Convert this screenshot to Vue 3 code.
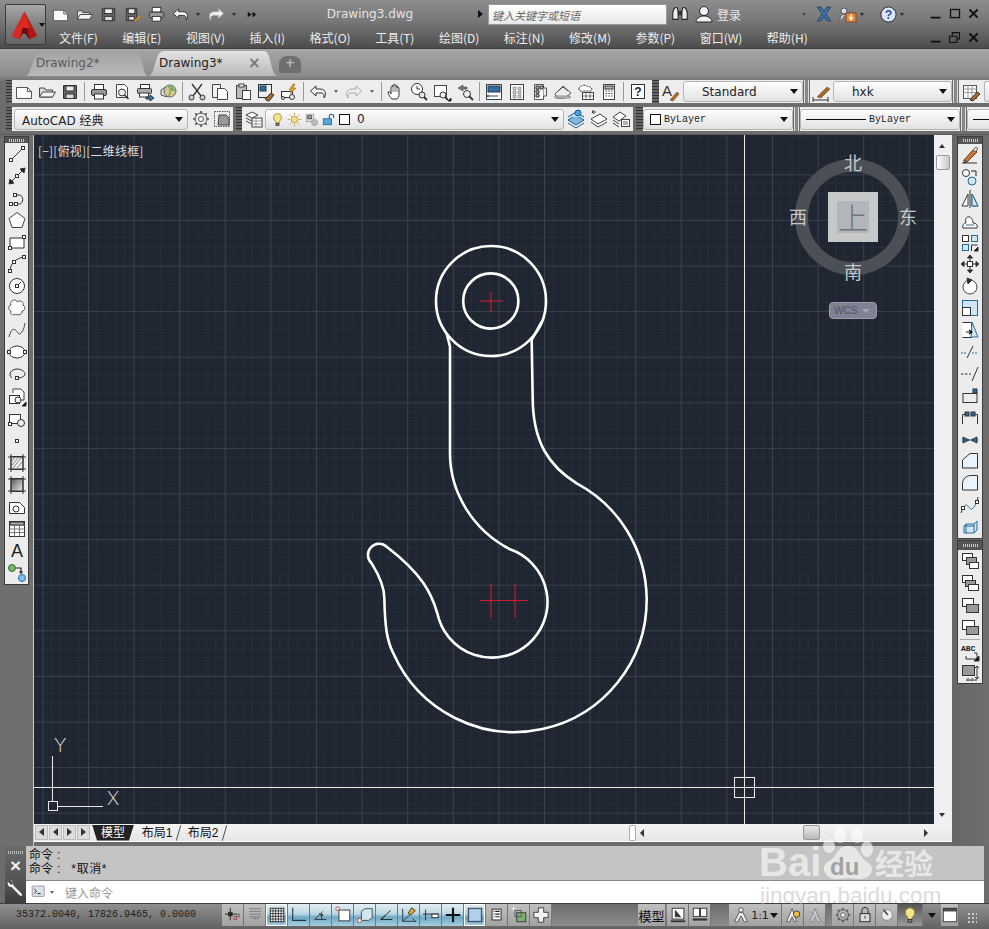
<template>
  <div class="app">
    <header class="titlebar">
      <button class="app-btn">
        <svg width="32" height="32" viewBox="0 0 32 32">
          <path d="M16 2 L29 27 L21 31 L19 23 H13 L11 31 L3 27 Z" fill="#b01818" />
          <path d="M16 2 L22 19 H14 L11 31 L3 27 Z" fill="#d92a22" />
          <path d="M11 31 L14 19 H19 L21 31 L17 25 H14 Z" fill="#6c0c0c" />
        </svg>
        <i class="tri app-tri"></i>
      </button>
      <div class="title-col">
        <div class="title-row">
          <span v-for="(ic, i) in quick" :key="i" :class="ic.small ? 'qa-small' : 'qa'">
            <i v-if="ic.small" class="tri tri-tiny"></i>
            <Ico v-else :n="ic.n" :s="19" />
          </span>
          <span class="doc-title">Drawing3.dwg</span>
          <i class="play"></i>
          <div class="search">键入关键字或短语</div>
          <span class="qa binoc"><Ico n="binoc" :s="18" /></span>
          <span class="qa"><Ico n="user" :s="20" /></span>
          <span class="login">登录</span>
          <i class="tri tri-tiny login-arrow"></i>
          <span class="qa x-btn"><Ico n="xapp" :s="20" /></span>
          <span class="qa"><Ico n="lock2" :s="20" /></span>
          <i class="tri tri-tiny"></i>
          <span class="qa help"><Ico n="help" :s="19" /></span>
          <i class="tri tri-tiny"></i>
          <div class="win-ctl">
            <Ico n="wmin" :s="18" /><Ico n="wmax" :s="18" /><Ico n="wclose" :s="18" />
          </div>
        </div>
        <div class="menu-row">
          <nav class="menu">
            <span v-for="m in menus" :key="m">{{ m }}</span>
          </nav>
          <div class="win-ctl">
            <Ico n="wmin" :s="18" /><Ico n="wrest" :s="18" /><Ico n="wclose" :s="18" />
          </div>
        </div>
      </div>
    </header>

    <div class="doc-tabs">
      <div class="doc-tab">Drawing2*</div>
      <div class="doc-tab active">Drawing3*<b>×</b></div>
      <div class="doc-new"><span>+</span></div>
    </div>

    <div class="toolbars">
      <div class="tb-row">
        <i class="grip"></i>
        <div class="panel std">
          <template v-for="(ic, i) in row1" :key="i">
            <i v-if="ic === '|'" class="sep"></i>
            <i v-else-if="ic === 'v'" class="arrow-cell"><i class="tri tri-tiny dim"></i></i>
            <span v-else class="tb-btn"><Ico :n="ic" /></span>
          </template>
        </div>
        <i class="grip g2"></i>
        <div class="panel">
          <span class="tb-btn"><Ico n="textstyle" /></span>
          <div class="combo c-std">Standard<i class="tri"></i></div>
        </div>
        <i class="bars"></i>
        <div class="panel">
          <span class="tb-btn"><Ico n="dimstyle" /></span>
          <div class="combo c-hxk">hxk<i class="tri"></i></div>
        </div>
        <i class="bars"></i>
        <div class="panel">
          <span class="tb-btn"><Ico n="tablestyle" /></span>
          <div class="combo c-tail"></div>
        </div>
      </div>
      <div class="tb-row row2">
        <i class="grip"></i>
        <div class="panel">
          <div class="combo c-ws">AutoCAD 经典<i class="tri"></i></div>
          <span class="tb-btn gear"><Ico n="gear" /></span>
          <span class="tb-btn"><Ico n="wsbox" /></span>
        </div>
        <i class="grip g3"></i>
        <div class="panel">
          <span class="tb-btn"><Ico n="layers" /></span>
          <div class="combo c-layer">
            <Ico n="bulb" :s="15" /><Ico n="sun" :s="15" /><Ico n="freeze" :s="15" /><Ico n="unlock" :s="15" />
            <i class="swatch"></i><span class="layer-name">0</span><i class="tri"></i>
          </div>
          <span class="tb-btn"><Ico n="layerblue" /></span>
          <span class="tb-btn"><Ico n="layerprev" /></span>
          <span class="tb-btn"><Ico n="layerstate" /></span>
        </div>
        <i class="grip g4"></i>
        <div class="panel">
          <div class="combo mono c-color"><i class="swatch"></i>ByLayer<i class="tri"></i></div>
        </div>
        <i class="bars"></i>
        <div class="panel">
          <div class="combo mono c-ltype"><i class="dash"></i>ByLayer<i class="tri"></i></div>
        </div>
        <i class="bars"></i>
        <div class="panel">
          <div class="combo mono c-tail2"><i class="dash"></i></div>
        </div>
      </div>
    </div>

    <div class="workspace">
      <aside class="side-left">
        <div class="vbar">
          <i class="vgrip"></i>
          <span v-for="ic in leftTools" :key="ic" class="v-btn"><Ico :n="ic" /></span>
        </div>
      </aside>

      <main class="center">
        <div class="view-row">
          <div class="canvas">
            <svg class="drawing" width="900" height="689" viewBox="34 135 900 689">
              <defs>
                <pattern id="grid" x="88" y="174.3" width="45.6" height="45.6" patternUnits="userSpaceOnUse">
                  <path d="M9.12 0V45.6M18.24 0V45.6M27.36 0V45.6M36.48 0V45.6M0 9.12H45.6M0 18.24H45.6M0 27.36H45.6M0 36.48H45.6" stroke="#252d38" stroke-width="1" />
                  <path d="M0.5 0V45.6M0 0.5H45.6" stroke="#39414d" stroke-width="1" />
                </pattern>
              </defs>
              <rect x="34" y="135" width="900" height="689" fill="#1f2632" />
              <rect x="34" y="135" width="900" height="689" fill="url(#grid)" />

              <g fill="none" stroke="#fff" stroke-width="2.6">
                <circle cx="491" cy="301" r="55" />
                <circle cx="490.8" cy="301" r="27.6" />
                <path transform="translate(350 230) scale(.33333)" :d="hookPath" stroke-width="7.8" stroke-linejoin="round" />
              </g>
              <path
                d="M480 301H503M491 292V312M480 600.5H528M491 584V618M515 584V618"
                stroke="#d01c30"
                fill="none"
              />

              <path d="M744.5 135V824M34 787.5H934" stroke="#e6e8ea" />
              <rect x="734.5" y="777.5" width="20" height="20" fill="none" stroke="#eceeef" />

              <g fill="none" stroke="#e6e8ea">
                <path d="M52.5 756V801M58 806.5H103" />
                <rect x="48.5" y="801.5" width="9" height="9" />
              </g>
              <text x="54" y="752" class="ucs">Y</text>
              <text x="107" y="805" class="ucs">X</text>

              <circle cx="853" cy="217" r="51.5" fill="none" stroke="#4b5057" stroke-width="13" />
              <rect x="828" y="192" width="50" height="50" fill="#c6c8c9" />
              <rect x="837" y="201" width="32" height="32" fill="#b2b5b9" />
              <text x="853" y="229" class="cube-top">上</text>
              <text x="853" y="170" class="compass">北</text>
              <text x="853" y="279" class="compass">南</text>
              <text x="798" y="224" class="compass">西</text>
              <text x="908" y="224" class="compass">东</text>
            </svg>
            <div class="vp-label">[−][俯视][二维线框]</div>
            <div class="wcs">WCS<i></i></div>
          </div>
          <div class="vscroll">
            <i class="sc-up"></i>
            <i class="sc-thumb"></i>
            <i class="sc-down"></i>
          </div>
        </div>
        <div class="layout-row">
          <div class="nav-btns">
            <i class="nb first"></i><i class="nb prev"></i><i class="nb next"></i><i class="nb last"></i>
          </div>
          <span class="lt lt-model">模型</span>
          <span class="lt slant">布局1</span>
          <span class="lt slant">布局2</span>
          <i class="split"></i>
          <i class="h-left"></i>
          <i class="h-thumb"></i>
          <i class="h-right"></i>
        </div>
      </main>

      <aside class="side-right">
        <div class="vbar r1">
          <i class="vgrip"></i>
          <span v-for="ic in rightTools" :key="ic" class="v-btn"><Ico :n="ic" /></span>
        </div>
        <div class="vbar r2">
          <i class="vgrip"></i>
          <span v-for="ic in orderTools" :key="ic" class="v-btn"><Ico :n="ic" /></span>
          <i class="hsep"></i>
          <span class="v-btn"><Ico n="abc" /></span>
          <span class="v-btn"><Ico n="annoscale" /></span>
        </div>
      </aside>
    </div>

    <section class="command">
      <div class="cmd-handle">
        <i class="cmd-grip"></i>
        <b class="cmd-x">×</b>
        <Ico n="wrench" :s="18" />
      </div>
      <div class="cmd-body">
        <div class="cmd-log">
          <div>命令<span class="colon">:</span></div>
          <div>命令<span class="colon">:</span><span class="cancel">*取消*</span></div>
        </div>
        <div class="cmd-input">
          <Ico n="prompt" :s="16" />
          <i class="tri tri-tiny dim"></i>
          <span>键入命令</span>
        </div>
      </div>
    </section>

    <footer class="status">
      <span class="coords">35372.0040, 17826.9465, 0.0000</span>
      <span v-for="b in statusBtns" :key="b.n" class="st-btn" :class="{ on: b.on, sel: b.sel }"><Ico :n="b.n" :s="18" /></span>
      <span class="st-gap"></span>
      <span class="st-btn st-model">模型</span>
      <span class="st-btn"><Ico n="layoutA" :s="18" /></span>
      <span class="st-btn"><Ico n="layoutB" :s="18" /></span>
      <span class="st-gap g-s"></span>
      <span class="st-btn st-scale"><Ico n="anno" :s="18" />1:1<i class="tri"></i></span>
      <span class="st-btn"><Ico n="annoY" :s="18" /></span>
      <span class="st-btn"><Ico n="annoG" :s="18" /></span>
      <span class="st-gap g-t"></span>
      <span class="st-btn"><Ico n="gear" :s="18" /></span>
      <span class="st-btn"><Ico n="padlock" :s="18" /></span>
      <span class="st-btn"><Ico n="tools" :s="18" /></span>
      <span class="st-btn st-light"><Ico n="bulb" :s="18" /></span>
      <i class="tri st-tri"></i>
      <span class="st-btn st-win"><Ico n="cleanscr" :s="18" /></span>
      <i class="st-grip"></i>
    </footer>

    <div class="watermark">
      <svg width="60" height="60" viewBox="0 0 60 60" class="paw">
        <ellipse cx="23" cy="10" rx="6" ry="8" />
        <ellipse cx="40" cy="10" rx="6" ry="8" />
        <ellipse cx="12" cy="21" rx="6" ry="7" />
        <ellipse cx="50" cy="24" rx="6" ry="8" />
        <path d="M31 21C20 21 20 32 12 36C2 41 8 55 20 54C27 53 35 53 42 54C54 55 60 42 50 37C42 32 42 21 31 21Z" />
      </svg>
      <span class="wm-bai">Bai</span>
      <span class="wm-du">du</span>
      <span class="wm-cn">经验</span>
      <span class="wm-url">jingyan.baidu.com</span>
    </div>
  </div>
</template>

<script setup>
import { h } from "vue";

const grip = (x, y) => `<rect x="${x - 1.5}" y="${y - 1.5}" width="3" height="3" fill="#fff"/>`;
const sheet = (x, y, w, ht, f = "#fff") => `<rect x="${x}" y="${y}" width="${w}" height="${ht}" fill="${f}"/>`;

const icons = {
  new: '<path d="M2.5 5.5h11l4 4v7h-15z" fill="#fafafa" stroke="#555"/><path d="M13.5 5.5v4h4" stroke="#555"/>',
  open: '<path d="M2.5 15V6h5l1 2h7v7z" fill="#ddd" stroke="#444"/><path d="M2.5 15l3-5h13l-3 5z" fill="#f2f2f2" stroke="#444"/>',
  save: '<path d="M3.5 3.5h13v13h-13z" fill="#666" stroke="#333"/><rect x="6" y="4" width="8" height="5" fill="#eee"/><rect x="6" y="12" width="8" height="4.5" fill="#ddd"/>',
  saveas: '<path d="M3.5 3.5h11v13h-11z" fill="#666" stroke="#333"/><rect x="5.5" y="4" width="7" height="5" fill="#eee"/><rect x="6" y="12" width="6" height="4" fill="#ddd"/><path d="M11 17l6-6 2 1-6 6z" fill="#d99a3a" stroke="#7a5520" stroke-width=".6"/>',
  print: '<rect x="5.5" y="2.5" width="9" height="5" fill="#fff" stroke="#333"/><rect x="2.5" y="7.5" width="15" height="6" rx="1.5" fill="#999" stroke="#333"/><rect x="5.5" y="12" width="9" height="5" fill="#fff" stroke="#333"/>',
  undo: '<path d="M8 4L2.5 9 8 14v-3h5c2 0 3 1 3 3v2c2-2 3-9-4-9H8z" fill="#f2f2f2" stroke="#333"/>',
  redo: '<path d="M12 4l5.5 5-5.5 5v-3H7c-2 0-3 1-3 3v2c-2-2-3-9 4-9h4z" fill="#eee" stroke="#aaa"/>',
  more: '<path d="M5 7l4 3-4 3zM10 7l4 3-4 3z" fill="#111" stroke="none"/>',
  preview: '<path d="M4.5 2.5h8l3 3v10h-11z" fill="#fff" stroke="#444"/><circle cx="10" cy="10.5" r="3.5" fill="#e6eef4" stroke="#333"/><path d="M12.5 13l4 4" stroke="#333" stroke-width="1.6"/>',
  plot3d: '<rect x="5.5" y="2.5" width="9" height="4" fill="#fff" stroke="#333"/><rect x="2.5" y="6.5" width="14" height="5" rx="1" fill="#aaa" stroke="#333"/><rect x="4.5" y="11" width="9" height="4" fill="#fff" stroke="#333"/><path d="M11 15h4v-2l4 3-4 3v-2h-4z" fill="#2a7fc0"/>',
  publish: '<path d="M3 8l6-4v11l-6-2z" fill="#ddd" stroke="#555"/><circle cx="12" cy="9" r="6" fill="#d7c98a" stroke="#666"/><path d="M10 4c3 3 3 7 0 11" stroke="#4c9a56"/><path d="M12 3c3 1 5 4 5 6h-5z" fill="#7cae6e" stroke="none"/>',
  cut: '<path d="M5 2l9 12M15 2L6 14" stroke="#333" stroke-width="1.3"/><circle cx="4.5" cy="15.5" r="2.5" fill="#ccc" stroke="#333"/><circle cx="15.5" cy="15.5" r="2.5" fill="#ccc" stroke="#333"/>',
  copy: '<path d="M2.5 2.5h8v13h-8z" fill="#f2f2f2" stroke="#444"/><path d="M7.5 6.5h7l3 3v8h-10z" fill="#fff" stroke="#444"/>',
  paste: '<rect x="3.5" y="3.5" width="10" height="13" fill="#bbb" stroke="#444"/><rect x="6" y="2" width="5" height="3" fill="#eee" stroke="#444"/><rect x="9.5" y="8.5" width="8" height="9" fill="#fff" stroke="#444"/>',
  match: '<rect x="2.5" y="2.5" width="13" height="13" fill="#eee" stroke="#234"/><rect x="4" y="4" width="6" height="5" fill="#2c6ca8"/><path d="M9 17l6-6 3 2-5 6c-2 0-3-1-4-2z" fill="#a8692c"/>',
  blockedit: '<rect x="2.5" y="9.5" width="11" height="6" fill="#fff" stroke="#333"/><circle cx="13" cy="15" r="2.5" fill="#eee" stroke="#333"/><circle cx="4" cy="16" r="1.5" fill="#fff" stroke="#333"/><path d="M14 2l-4 6h3l-2 4 6-6h-3l2-4z" fill="#e0a030" stroke="#8a6010" stroke-width=".5"/>',
  pan: '<path d="M6 17c-2-2-4-5-4-7 1-1 2 0 3 2V5c1-2 2-1 2 0V3c1-1 2-1 2 0v1c1-1 2-1 2 0v2c1-1 2-1 2 0v6c0 3-1 4-2 5z" fill="#fff" stroke="#333"/><path d="M7 5v5M9 4v6M11 4v6" stroke="#333" stroke-width=".7"/>',
  zoomrt: '<circle cx="8" cy="7" r="5.5" fill="#fff" stroke="#333"/><path d="M8 4v3h3" stroke="#333"/><circle cx="13" cy="13" r="3" fill="#e0e8ee" stroke="#333"/><path d="M15 15l3 3" stroke="#333" stroke-width="1.8"/>',
  zoomwin: '<rect x="2.5" y="3.5" width="12" height="11" fill="#fff" stroke="#444"/><circle cx="11" cy="13" r="3" fill="#eee" stroke="#333"/><path d="M13 15l3 3" stroke="#333" stroke-width="1.8"/><path d="M19 19l-3 0 3-3z" fill="#111"/>',
  zoomprev: '<path d="M8 3L3 6l5 3V7h4V5H8z" fill="#777" stroke="#333" stroke-width=".5"/><circle cx="12" cy="12" r="3.5" fill="#eee" stroke="#333"/><path d="M14 14l4 4" stroke="#333" stroke-width="1.8"/>',
  props: '<rect x="2.5" y="2.5" width="15" height="15" fill="#fff" stroke="#345"/><rect x="4" y="4" width="12" height="6" fill="#2c6ca8"/><path d="M5 14h9M5 13l-2 1 2 1" stroke="#345"/>',
  dc: '<rect x="3.5" y="2.5" width="13" height="15" fill="#fff" stroke="#444"/><path d="M6 5h3v3H6zM11 5h3v3h-3zM6 9h3v3H6zM11 9h3v3h-3zM6 13h3v3H6zM11 13h3v3h-3z" fill="#ccc" stroke="#666" stroke-width=".5"/>',
  palette: '<path d="M4.5 2.5h9v15h-9z" fill="#fff" stroke="#555"/><path d="M6 4h3v3H6zM10 4h3v3h-3zM6 8h3v3H6zM6 12h3v3H6z" fill="#bbb"/><path d="M13.5 6h3v8h-3" fill="#eee" stroke="#555"/>',
  sheetset: '<path d="M2 12l8-8 8 7-6 5H4z" fill="#eee" stroke="#555"/><path d="M4 10l6-5 5 4" fill="none" stroke="#555"/><path d="M2 14h15v2H2z" fill="#ccc" stroke="#555" stroke-width=".6"/>',
  markup: '<path d="M3 7c0-4 8-5 9-2 3-1 5 2 3 4H5C3 9 3 8 3 7z" fill="#fff" stroke="#444" stroke-dasharray="2 1"/><rect x="6.5" y="10.5" width="11" height="7" fill="#fff" stroke="#444"/><path d="M6.5 14h11M10 10.5v7M14 10.5v7" stroke="#444" stroke-width=".7"/>',
  calc: '<rect x="4.5" y="2.5" width="11" height="15" fill="#fff" stroke="#444"/><rect x="6" y="4" width="8" height="3" fill="#bbb"/><path d="M6.5 9h7M6.5 11.5h7M6.5 14h7" stroke="#444" stroke-dasharray="1.5 1.3"/>',
  helpbox: '<rect x="3.5" y="2.5" width="13" height="14" fill="#fff" stroke="#333"/><text x="10" y="14" font-size="12" font-weight="700" text-anchor="middle" fill="#222" stroke="none" font-family="Liberation Sans">?</text>',
  textstyle: '<text x="1" y="14" font-size="15" fill="#333" stroke="none" font-family="Liberation Sans">A</text><path d="M9 18l7-8 2 2-6 7z" fill="#a8692c" stroke="#64401a" stroke-width=".5"/>',
  dimstyle: '<path d="M1 18h15M1 15v5M16 15v5" stroke="#333"/><path d="M5 15l10-10 3 2-9 9z" fill="#a8692c" stroke="#64401a" stroke-width=".5"/>',
  tablestyle: '<rect x="2.5" y="3.5" width="13" height="13" fill="#fff" stroke="#555"/><path d="M2.5 7h13M2.5 10.5h13M7 3.5v13M11 3.5v13" stroke="#999"/><path d="M9 18l7-8 3 2-7 7z" fill="#a8692c"/>',
  gear: '<circle cx="10" cy="10" r="6" fill="none" stroke="#555"/><circle cx="10" cy="10" r="2.5" fill="#fff" stroke="#555"/><path d="M10 2v2.5M10 15.5V18M2 10h2.5M15.5 10H18M4.3 4.3l1.8 1.8M13.9 13.9l1.8 1.8M4.3 15.7l1.8-1.8M13.9 6.1l1.8-1.8" stroke="#555" stroke-width="1.6"/>',
  wsbox: '<path d="M2.5 2.5h15v15h-15z" stroke-dasharray="1.5 1" stroke="#555"/><path d="M7 6l7 0 3 3v7H6z" fill="#999" stroke="#444"/>',
  layers: '<rect x="8" y="9" width="10" height="9" fill="#fff" stroke="#444"/><path d="M8 12h10M8 15h10M12 9v9" stroke="#777" stroke-width=".7"/><path d="M2 6l6-3 6 3-6 3zM2 9l6 3M2 12l6 3" fill="#fff" stroke="#444"/>',
  bulb: '<path d="M10 2a5.5 5.5 0 0 0-3 10c1 1 1 2 1 3h4c0-1 0-2 1-3a5.5 5.5 0 0 0-3-10z" fill="#f5e58a" stroke="#8a7a30"/><rect x="8" y="15" width="4" height="3" fill="#888"/>',
  sun: '<circle cx="10" cy="10" r="4.5" fill="#f4dd8a" stroke="#b08a30"/><path d="M10 1v3M10 16v3M1 10h3M16 10h3M3.5 3.5l2 2M14.5 14.5l2 2M3.5 16.5l2-2M14.5 5.5l2-2" stroke="#b08a30"/>',
  freeze: '<rect x="3" y="3" width="10" height="10" fill="#ddd" stroke="#999"/><rect x="5" y="5" width="5" height="4" fill="#aaa"/><circle cx="14" cy="14" r="4" fill="#bbb" stroke="#999"/>',
  unlock: '<rect x="3" y="9" width="11" height="8" fill="#58a6dc" stroke="#1c5e90"/><path d="M11 9V6a3 3 0 0 1 6 0v2" stroke="#1c5e90" stroke-width="1.4"/>',
  layerblue: '<path d="M2 11l8-5 8 5-8 5z" fill="#7fb7e0" stroke="#1c5e90"/><path d="M2 14l8 5 8-5" stroke="#1c5e90"/><path d="M2 8l8-5 8 5" fill="#bfe0f5" stroke="#1c5e90"/><circle cx="12" cy="4" r="3" fill="#4fa0d8" stroke="#1c5e90"/>',
  layerprev: '<path d="M2 10l9-5 7 5-9 5zM2 13l7 5 9-5" fill="#fff" stroke="#444"/><path d="M7 3L3 3l2-2M3 3l2 2" stroke="#333"/>',
  layerstate: '<path d="M1 8l7-5 6 4-7 5zM1 11l6 4M1 14l6 4" fill="#fff" stroke="#444"/><rect x="9.5" y="10.5" width="8" height="7" fill="#fff" stroke="#444"/><path d="M11 13h5M11 15h5" stroke="#666"/>',
  line: `<path d="M4 16L16 4"/>${grip(4, 16)}${grip(16, 4)}`,
  xline: '<path d="M4 16L16 4"/><path d="M2 18l5-1-4-4zM18 2l-5 1 4 4z" fill="#222"/>' + grip(10, 10),
  pline: `<path d="M4 16h8c5 0 5-9 0-9H9"/>${grip(4, 16)}${grip(9, 16)}${grip(8, 7)}`,
  polygon: '<path d="M10 2.5l8 6-3 9H5l-3-9z" fill="#fff" stroke="#444"/>',
  rect: `<path d="M3 6h14v10H3z" fill="#fff" stroke="#333"/>${grip(17, 5)}${grip(3, 16)}`,
  arc: `<path d="M3 17C3 10 9 4 17 3"/>${grip(3, 17)}${grip(7, 8)}${grip(17, 3)}`,
  circle: `<circle cx="10" cy="10" r="7.5" fill="#fff" stroke="#333"/><path d="M10 10l4-4"/>${grip(10, 10)}`,
  cloud: '<path d="M5 3c2-2 5-1 5 1 2-2 7-1 6 3 3 2 2 6-1 6 1 3-4 5-6 3-2 2-7 0-5-3-3-1-3-6 0-6-1-2 0-4 1-4z" fill="#fff" stroke="#555"/>',
  spline: '<path d="M2 17c3-12 7-7 9-4s6-2 7-10" stroke="#444"/>',
  ellipse: `<ellipse cx="10" cy="10" rx="8" ry="6" fill="#fff" stroke="#333"/>${grip(2, 10)}${grip(18, 10)}`,
  ellarc: `<path d="M5 14C0 10 5 5 10 5s8 3 8 5-3 4-8 4"/>${grip(10, 14)}`,
  insert: `<path d="M6 6V2h8l3 3v8h-3" fill="#fff" stroke="#444"/><rect x="2.5" y="8.5" width="10" height="8" fill="#fff" stroke="#333"/><circle cx="11" cy="13" r="3" fill="#eee" stroke="#333"/><path d="M19 19h-4l4-4z" fill="#111"/>`,
  mkblock: `<rect x="2.5" y="5.5" width="11" height="9" fill="#fff" stroke="#333"/><circle cx="14" cy="14" r="3.5" fill="#eee" stroke="#333"/>${grip(3, 15)}`,
  point: '<rect x="8.5" y="8.5" width="3" height="3" fill="#fff" stroke="#333"/>',
  hatch: '<path d="M4 3.5h12v13H4z" fill="#eee" stroke="#333"/><path d="M1 4h18M1 16h18M4 1v18M16 1v18" stroke="#333"/><path d="M5 8l3-4M5 12l7-8M6 15l9-11M10 15l5-6" stroke="#666" stroke-width=".8"/>',
  gradient: '<defs><linearGradient id="gr1" x1="0" y1="0" x2="1" y2="1"><stop offset="0" stop-color="#555"/><stop offset="1" stop-color="#eee"/></linearGradient></defs><rect x="4" y="3.5" width="12" height="13" fill="url(#gr1)" stroke="#333"/><path d="M1 4h18M1 16h18M4 1v18M16 1v18" stroke="#333"/>',
  region: '<path d="M2.5 5.5h10l5 5v6h-15z" fill="#fff" stroke="#333"/><circle cx="9" cy="12" r="3" fill="#fff" stroke="#333"/>',
  table: '<rect x="2.5" y="2.5" width="15" height="15" fill="#fff" stroke="#333"/><rect x="3" y="3" width="14" height="3" fill="#aaa"/><path d="M2.5 6.5h15M2.5 10h15M2.5 13.5h15M7.5 6.5v11M12.5 6.5v11" stroke="#777"/>',
  mtext: '<text x="10" y="16" font-size="18" text-anchor="middle" fill="#222" stroke="none" font-family="Liberation Sans">A</text>',
  addsel: '<circle cx="5" cy="5" r="3.5" fill="#7cb36a" stroke="#3a7030"/><circle cx="15" cy="15" r="3.5" fill="#80c0e8" stroke="#2a70a8"/><path d="M9 5h5v6M12 9h4" stroke="#222" stroke-width="1.2"/>',
  erase: '<path d="M4 15L14 4l3 3-10 10z" fill="#c9783c" stroke="#6a3a16"/><path d="M4 15l3 2-3 1z" fill="#f3c9a0"/><path d="M2 18h15" stroke="#333"/><path d="M13 5l3-3 2 2-3 3z" fill="#e3d7c3" stroke="#666"/>',
  ocopy: '<circle cx="6" cy="6" r="3.5" fill="#fff" stroke="#333"/><circle cx="12" cy="14" r="4" fill="#cfe6f5" stroke="#2a6a9a"/><path d="M11 4h5v5" stroke="#222"/>',
  mirror: '<path d="M8 5v12H2zM12 5v12h6z" fill="#fff" stroke="#333"/><path d="M10 1v18" stroke="#333"/><path d="M12 5v12h6z" fill="#cfe6f5" stroke="#2a6a9a"/>',
  offset: '<path d="M3 17h14c1-3-1-5-4-5 0-3-2-7-5-6-2 0-3 3-2 6-2 0-4 2-3 5z" fill="#fff" stroke="#333"/><path d="M6 14h8" stroke="#2a6a9a"/>',
  array: '<rect x="2.5" y="2.5" width="6" height="6" fill="#fff" stroke="#333"/><rect x="11.5" y="2.5" width="6" height="6" fill="#cfe6f5" stroke="#2a6a9a"/><rect x="2.5" y="11.5" width="6" height="6" fill="#cfe6f5" stroke="#2a6a9a"/><path d="M11.5 18v-6h6" stroke="#333"/><path d="M18 18h-4l4-4z" fill="#111"/>',
  move: '<rect x="7.5" y="7.5" width="5" height="5" fill="#fff" stroke="#333"/><path d="M10 1l2.5 3h-5zM10 19l2.5-3h-5zM1 10l3-2.5v5zM19 10l-3-2.5v5z" fill="#333"/><path d="M10 3v4M10 13v4M3 10h4M13 10h4" stroke="#333"/>',
  rotate: '<circle cx="10" cy="11" r="7" fill="#fff" stroke="#444"/><path d="M7 2l5 2-4 4z" fill="#333"/>',
  scale: '<rect x="2.5" y="2.5" width="15" height="15" fill="#cfe6f5" stroke="#2a6a9a"/><rect x="2.5" y="9.5" width="8" height="8" fill="#fff" stroke="#333"/>',
  stretch: '<path d="M2.5 2.5h9v15h-9" fill="#fff" stroke="#333"/><path d="M12 2l6 15H11z" fill="#cfe6f5" stroke="#2a6a9a"/><path d="M6 12h5M9 10l3 2-3 2" stroke="#111" stroke-width="1.2"/>',
  trim: '<path d="M1 11h5" stroke="#2a6a9a" stroke-dasharray="2 1"/><path d="M7 16L13 4" stroke="#333"/><path d="M12 11h6" stroke="#2a6a9a" stroke-dasharray="2 1"/>',
  extend: '<path d="M1 10h10" stroke="#333" stroke-dasharray="2.5 1.5"/><path d="M12 17L18 3" stroke="#333"/>',
  breakp: '<rect x="3" y="7.5" width="14" height="9" fill="none" stroke="#333"/><rect x="13" y="3" width="4" height="4" fill="#2a6a9a"/>',
  breakl: '<path d="M2.5 16V6.5h3M14.5 6.5h3V16" stroke="#333"/><rect x="5" y="4" width="4" height="4" fill="#2a6a9a"/><rect x="11" y="4" width="4" height="4" fill="#2a6a9a"/>',
  join: '<path d="M2 10h16" stroke="#2a6a9a"/><path d="M3 7l6 3-6 3zM17 7l-6 3 6 3z" fill="#2a6a9a"/>',
  chamfer: '<path d="M2.5 17V9L10 2.5h7.5V17z" fill="#eaf3fa" stroke="#333"/>',
  fillet: '<path d="M2.5 17V11C2.5 6 6 2.5 11 2.5h6.5V17z" fill="#eaf3fa" stroke="#333"/>',
  blend: `<path d="M3 14c4-10 6 2 9 0s3-4 5-7" stroke="#2a6a9a"/><path d="M1 18l2-6M18 2l-1 7" stroke="#333"/>${grip(3, 13)}${grip(17, 7)}`,
  explode: '<path d="M6 7h8l3-3v9l-3 3H4V9z" fill="#cfe6f5" stroke="#2a6a9a"/><path d="M6 7v9M14 7v9M4 9h10M14 7l3-3" stroke="#2a6a9a"/>',
  ord1: sheet(2.5, 2.5, 10, 7) + '<rect x="6.5" y="6.5" width="10" height="7" fill="#999" stroke="#333"/>' + sheet(9.5, 11.5, 9, 6),
  ord2: sheet(2.5, 2.5, 10, 7) + '<rect x="5.5" y="7.5" width="10" height="6" fill="#999" stroke="#333"/>' + sheet(8.5, 11.5, 10, 6),
  ord3: sheet(2.5, 3.5, 11, 8) + '<rect x="6.5" y="9.5" width="12" height="8" fill="#999" stroke="#333"/>',
  ord4: sheet(2.5, 3.5, 12, 9) + '<rect x="6.5" y="9.5" width="12" height="8" fill="#999" stroke="#333"/>',
  abc: '<text x="1" y="9" font-size="8" font-weight="700" fill="#222" stroke="none" font-family="Liberation Mono">ABC</text><path d="M14 11h3v6H6v-3" stroke="#333"/><path d="M19 19h-5l5-5z" fill="#111"/>',
  annoscale: '<rect x="2.5" y="2.5" width="12" height="10" fill="#999" stroke="#333"/><path d="M17 3v13M15 5l2-2 2 2M15 14l2 2 2-2M6 17h11" stroke="#333"/><path d="M8 15v4M12 15v4" stroke="#333" stroke-dasharray="1 1"/>',
  binoc: '<path d="M2 16V8l2-5h3l1 5v8zM18 16V8l-2-5h-3l-1 5v8z" fill="#eee" stroke="#222" stroke-width="1.2"/><rect x="8" y="7" width="4" height="4" fill="#333"/>',
  user: '<circle cx="10" cy="7" r="4.5" fill="#f0f4f8" stroke="#222"/><path d="M2 18c0-4 4-5 6-6h4c2 1 6 2 6 6z" fill="#f0f4f8" stroke="#222"/>',
  xapp: '<path d="M3 3h4l3 4 3-4h4l-5 7 5 7h-4l-3-4-3 4H3l5-7z" fill="#3a6ea8" stroke="#123" stroke-width=".5"/>',
  lock2: '<circle cx="6" cy="7" r="3" fill="#d7e2ee" stroke="#555"/><path d="M2 17c0-5 2-7 5-7" fill="#d7e2ee" stroke="#555"/><rect x="8" y="9" width="10" height="9" fill="#e88a2a" stroke="#844"/><path d="M13 10v5M11 13l2 3 2-3" stroke="#fff" stroke-width="1.2"/>',
  help: '<circle cx="10" cy="10" r="8" fill="#dbe6f5" stroke="#223"/><text x="10" y="14.5" font-size="13" font-weight="700" text-anchor="middle" fill="#2c55a8" stroke="none" font-family="Liberation Sans">?</text>',
  wmin: '<path d="M4 14h11" stroke="#111" stroke-width="2"/>',
  wmax: '<rect x="5" y="5" width="10" height="9" stroke="#111" stroke-width="1.5"/>',
  wrest: '<path d="M4 8h8v7H4zM7 8V4h8v7h-3" stroke="#111" stroke-width="1.2"/>',
  wclose: '<path d="M5 5l9 9M14 5l-9 9" stroke="#111" stroke-width="2.2"/>',
  wrench: '<path d="M4 1l3 3-1 2-2 0-3-3c-1 3 1 6 4 6l9 9c2 2 4 0 2-2L7 7c0-3-1-6-3-6z" fill="#f4f4f4" stroke="none"/>',
  prompt: '<rect x="1.5" y="2.5" width="15" height="13" rx="1" fill="#dce4ea" stroke="#889"/><path d="M4 6l3 3-3 3M8 12h4" stroke="#223" stroke-width="1.2"/>',
  snapinf: `<path d="M1 9h13M7 2v14" stroke="#222"/><rect x="5" y="7" width="4" height="4" fill="#222"/><rect x="11" y="12" width="3" height="3" stroke="#a44" /><rect x="14" y="9" width="3" height="3" stroke="#666"/>`,
  snap: '<path d="M4 3h12M4 6h12M4 9h12M4 12h12M8 14h6" stroke="#333" stroke-dasharray="1 1.2"/>',
  gridb: '<rect x="2.5" y="2.5" width="15" height="15" fill="#fff" stroke="#222"/><path d="M5.5 2.5v15M8.5 2.5v15M11.5 2.5v15M14.5 2.5v15M2.5 5.5h15M2.5 8.5h15M2.5 11.5h15M2.5 14.5h15" stroke="#222" stroke-width=".9"/>',
  ortho: '<path d="M3 2v14h15" stroke="#234" stroke-width="1.2"/>',
  polar: '<path d="M3 15h13M3 15l9-9" stroke="#333"/><path d="M8 8a8 8 0 0 1 3 7" stroke="#333"/><circle cx="11" cy="10" r="1" fill="#333"/>',
  osnap: '<rect x="5.5" y="4.5" width="12" height="12" fill="#fff" stroke="#333"/><circle cx="4" cy="3" r="2" fill="#fff" stroke="#a44"/>',
  osnap3d: '<path d="M6 6l4-3h8v10l-4 3H6z" fill="#cfe6ee" stroke="#445"/><circle cx="4" cy="16" r="2.2" fill="#fff" stroke="#a44"/>',
  ducs: '<path d="M3 15l11-10M3 15h13M3 15l5-4" stroke="#222"/>',
  dyn: '<path d="M3 3v14h15M3 17l10-9" stroke="#234"/><path d="M13 2l4 3-5 5-3-2z" fill="#e0a830"/><path d="M14 14l3 3" stroke="#234"/>',
  lwt: '<path d="M4 4v12M1 9h18" stroke="#222"/><rect x="11" y="9" width="7" height="4" fill="#fff" stroke="#222"/>',
  tpy: '<path d="M2 10h16M10 2v16" stroke="#111" stroke-width="2.4"/>',
  trans: '<rect x="2.5" y="2.5" width="15" height="15" fill="#8ab4dc" stroke="#234"/><path d="M4 4h12v12H4z" fill="#b5cfe8" stroke="none"/>',
  qprop: '<rect x="4.5" y="3.5" width="10" height="12" fill="#fff" stroke="#222"/><path d="M6 6h1M8 6h5M6 9h1M8 9h5M6 12h1M8 12h5" stroke="#222" stroke-width="1.2"/>',
  selcyc: '<rect x="7.5" y="7.5" width="10" height="10" fill="#7cb36a" stroke="#334"/><rect x="5.5" y="5" width="7" height="7" fill="none" stroke="#555"/><path d="M4 0v6M1 3h6" stroke="#eee"/>',
  annomon: '<path d="M7 2h6v5h5v6h-5v5H7v-5H2V7h5z" fill="#f2f2f2" stroke="#333"/>',
  layoutA: '<rect x="3.5" y="2.5" width="13" height="12" fill="#fff" stroke="#333"/><path d="M7 5v7h6z" fill="#333"/><path d="M2 17h16" stroke="#333" stroke-width="2"/>',
  layoutB: '<rect x="2.5" y="2.5" width="7" height="9" fill="#fff" stroke="#333"/><rect x="10.5" y="2.5" width="7" height="9" fill="#fff" stroke="#333"/><path d="M2 15h16" stroke="#333" stroke-width="2.4"/>',
  anno: '<path d="M10 2a2 2 0 0 1 0 5 2 2 0 0 1 0-5zM8 7L3 17l3 1 4-7 4 7 3-1-5-10z" fill="#eee" stroke="#333" stroke-width=".8"/>',
  annoY: '<path d="M9 3L3 17l3 1 3-6 3 6 2-1z" fill="#eee" stroke="#333" stroke-width=".8"/><circle cx="14" cy="9" r="3.5" fill="#f0c040"/>',
  annoG: '<path d="M10 3L4 17l3 1 3-6 3 6 3-1z" fill="#ccc" stroke="#777" stroke-width=".8"/><path d="M4 6l12 8" stroke="#999"/>',
  padlock: '<rect x="4.5" y="8.5" width="11" height="9" fill="#ddd" stroke="#222"/><path d="M6.5 8.5V5a3.5 3.5 0 0 1 7 0v3.5M10 11v3" stroke="#222"/>',
  tools: '<circle cx="10" cy="10" r="6" fill="#eee" stroke="#888"/><path d="M6 4l5 6" stroke="#555" stroke-width="2"/>',
  cleanscr: '<rect x="2.5" y="2.5" width="15" height="15" fill="#fff" stroke="#333"/><rect x="3" y="3" width="14" height="2.5" fill="#555"/>',
};

// one svg per icon, stroke and fill defaults live on the svg itself
const Ico = (props) =>
  h("svg", {
    class: "ico",
    width: props.s || 20,
    height: props.s || 20,
    viewBox: "0 0 20 20",
    fill: "none",
    stroke: "#333",
    innerHTML: icons[props.n],
  });
Ico.props = ["n", "s"];

const quick = [
  { n: "new" }, { n: "open" }, { n: "save" }, { n: "saveas" }, { n: "print" }, { n: "undo" },
  { small: true }, { n: "redo" }, { small: true }, { n: "more" },
];
const menus = [
  "文件(F)", "编辑(E)", "视图(V)", "插入(I)", "格式(O)", "工具(T)", "绘图(D)",
  "标注(N)", "修改(M)", "参数(P)", "窗口(W)", "帮助(H)",
];
const row1 = [
  "new", "open", "save", "|", "print", "preview", "plot3d", "publish", "|",
  "cut", "copy", "paste", "match", "blockedit", "|", "undo", "v", "redo", "v", "|",
  "pan", "zoomrt", "zoomwin", "zoomprev", "|",
  "props", "dc", "palette", "sheetset", "markup", "calc", "|", "helpbox",
];
const leftTools = [
  "line", "xline", "pline", "polygon", "rect", "arc", "circle", "cloud", "spline", "ellipse",
  "ellarc", "insert", "mkblock", "point", "hatch", "gradient", "region", "table", "mtext", "addsel",
];
const rightTools = [
  "erase", "ocopy", "mirror", "offset", "array", "move", "rotate", "scale", "stretch", "trim",
  "extend", "breakp", "breakl", "join", "chamfer", "fillet", "blend", "explode",
];
const orderTools = ["ord1", "ord2", "ord3", "ord4"];
const statusBtns = [
  { n: "snapinf" }, { n: "snap" }, { n: "gridb", on: true, sel: true }, { n: "ortho", on: true },
  { n: "polar", on: true }, { n: "osnap", on: true }, { n: "osnap3d", on: true }, { n: "ducs", on: true },
  { n: "dyn", on: true }, { n: "lwt", on: true }, { n: "tpy", on: true }, { n: "trans", on: true, sel: true },
  { n: "qprop" }, { n: "selcyc" }, { n: "annomon" },
];

// hook outline, traced from the reference at 3x (drawn through a scale on the path)
const hookPath = [
  "M290 310 L300 350 L300 670",
  "C300 790 370 900 480 958",
  "A167 167 0 1 1 262 1150",
  "C245 1090 215 1030 110 950",
  "A30 30 0 0 0 65 1000",
  "C90 1040 103 1075 103 1105",
  "C105 1190 110 1230 130 1270",
  "A397 397 0 0 0 890 1105",
  "A397 397 0 0 0 680 760",
  "C600 710 548 640 548 500",
  "L545 330 L575 275",
].join(" ");
</script>

<style scoped>
.app {
  position: relative;
  width: 989px;
  height: 929px;
  overflow: hidden;
  background: #6c6c6c;
  font-family: "DejaVu Sans", "Noto Sans CJK SC", sans-serif;
  font-size: 12px;
  color: #222;
}
.ico {
  display: block;
  flex: none;
}
i {
  display: block;
  flex: none;
  font-style: normal;
}
.tri {
  width: 0;
  height: 0;
  border-left: 4px solid transparent;
  border-right: 4px solid transparent;
  border-top: 5px solid #111;
}
.tri-tiny {
  border-left-width: 2.5px;
  border-right-width: 2.5px;
  border-top: 3px solid #2a2a2a;
}
.tri-tiny.dim {
  border-top-color: #666;
}

/* title bar */
.titlebar {
  display: flex;
  height: 49px;
  background: linear-gradient(#8d8d8d, #777 45%, #4c4c4c);
  border-bottom: 1px solid #3e3e3e;
  box-sizing: border-box;
}
.app-btn {
  width: 41px;
  height: 41px;
  margin: 4px 2px 0 5px;
  padding: 0 0 0 3px;
  display: flex;
  align-items: center;
  flex: none;
  border: 1px solid #3a3a3a;
  border-radius: 2px;
  background: linear-gradient(#a8a8a8, #7c7c7c 55%, #666);
}
.app-tri {
  border-left-width: 3px;
  border-right-width: 3px;
  border-top-width: 4px;
  margin-left: -1px;
}
.title-col {
  flex: 1;
  min-width: 0;
}
.title-row {
  display: flex;
  align-items: center;
  height: 28px;
}
.qa {
  width: 24px;
  display: flex;
  justify-content: center;
  flex: none;
}
.qa-small {
  width: 12px;
  display: flex;
  justify-content: center;
  flex: none;
}
.doc-title {
  width: 212px;
  flex: none;
  text-align: center;
  color: #e4e4e4;
}
.play {
  width: 0;
  height: 0;
  margin: 0 3px 0 2px;
  border-top: 4px solid transparent;
  border-bottom: 4px solid transparent;
  border-left: 5px solid #111;
}
.search {
  width: 179px;
  height: 21px;
  line-height: 23px;
  padding-left: 3px;
  margin-left: 2px;
  box-sizing: border-box;
  background: linear-gradient(#fff, #e8e8e8);
  border: 1px solid #999;
  color: #666;
  font-size: 11px;
  font-style: italic;
  flex: none;
}
.binoc {
  margin-left: 1px;
}
.login {
  width: 26px;
  margin-left: 1px;
  color: #e8e8e8;
  flex: none;
}
.login-arrow {
  margin-left: 59px;
  border-top-color: #444;
}
.x-btn {
  margin-left: 6px;
}
.help {
  margin-left: 12px;
}
.win-ctl {
  display: flex;
  margin-left: auto;
  padding-right: 6px;
  gap: 1px;
}
.menu-row {
  display: flex;
  align-items: center;
  height: 20px;
}
.menu {
  display: flex;
  gap: 24.5px;
  padding-left: 11px;
  color: #ececec;
  font-family: "Noto Sans CJK SC", "DejaVu Sans", sans-serif;
  line-height: 20px;
}

/* drawing tabs */
.doc-tabs {
  display: flex;
  align-items: flex-end;
  height: 27px;
  padding-left: 25px;
  box-sizing: border-box;
  background: linear-gradient(#a6a6a6, #8b8b8b);
}
.doc-tab {
  position: relative;
  width: 123px;
  height: 25px;
  padding-left: 11px;
  box-sizing: border-box;
  line-height: 25px;
  color: #5c5c5c;
  background: linear-gradient(#a2a2a2, #b9b9b9);
  clip-path: path("M0 25C8 25 6 1 16 1H111C119 1 117 25 123 25Z");
}
.doc-tab.active {
  width: 130px;
  padding-left: 11px;
  color: #222;
  background: linear-gradient(#e2e2e2, #b9b9b9);
  clip-path: path("M0 25C8 25 6 0 16 0H116C124 0 122 25 130 25Z");
}
.doc-tab b {
  position: absolute;
  left: 100px;
  top: 0;
  color: #777;
  font-size: 15px;
}
.doc-new {
  width: 22px;
  height: 17px;
  margin: 0 0 3px 1px;
  border-radius: 8px 8px 2px 2px;
  background: #6f6f6f;
  text-align: center;
  color: #bbb;
  line-height: 15px;
  font-weight: 700;
}

/* toolbars */
.toolbars {
  height: 59px;
  box-sizing: border-box;
  padding: 4px 0 0 6px;
  background: linear-gradient(#8a8a8a, #6d6d6d 10%, #6d6d6d);
  border-bottom: 1px solid #5a5a5a;
}
.tb-row {
  display: flex;
  height: 23px;
}
.row2 {
  margin-top: 4px;
  height: 24px;
}
.grip {
  width: 6px;
  background: repeating-linear-gradient(#333 0 1px, #666 1px 3px);
}
.g2 {
  width: 7px;
}
.g3 {
  margin-left: 3px;
}
.g4 {
  margin-left: 3px;
  width: 7px;
}
.panel {
  display: flex;
  align-items: center;
  background: #ededed;
  flex: none;
}
.std {
  width: 640px;
  padding-left: 0.5px;
  box-sizing: border-box;
}
.sep {
  width: 1px;
  height: 19px;
  margin: 0 3px 0 2px;
  background: #999;
}
.arrow-cell {
  width: 13px;
  display: flex;
  justify-content: center;
}
.tb-btn {
  width: 23px;
  height: 22px;
  display: flex;
  align-items: center;
  justify-content: center;
  flex: none;
}
.gear {
  margin-left: 1px;
  margin-right: -2px;
}
.combo {
  position: relative;
  display: flex;
  align-items: center;
  height: 21px;
  box-sizing: border-box;
  border: 1px solid #b5b5b5;
  border-radius: 3px;
  background: linear-gradient(#fdfdfd, #e2e2e2);
  flex: none;
}
.combo > .tri {
  position: absolute;
  right: 4px;
  top: 7px;
}
.bars {
  width: 5px;
  margin: 0 1px;
  border-left: 1px solid #ddd;
  border-right: 1px solid #ddd;
  box-sizing: border-box;
  background: #888;
}
.c-std {
  width: 120px;
  margin-left: 1px;
  padding-left: 18px;
}
.c-hxk {
  width: 119px;
  padding-left: 18px;
}
.c-tail {
  width: 20px;
  margin-left: 2px;
  border-right: none;
}
.c-ws {
  width: 174px;
  margin-left: 2px;
  padding-left: 7px;
}
.c-layer {
  width: 299px;
  padding-left: 4px;
  gap: 2px;
}
.swatch {
  width: 9px;
  height: 9px;
  margin-left: 1px;
  border: 1px solid #111;
  background: #fff;
}
.layer-name {
  margin-left: 5px;
}
.mono {
  font-family: "Liberation Mono", monospace;
  font-size: 10px;
}
.c-color {
  width: 150px;
  padding-left: 5px;
  gap: 3px;
}
.c-ltype {
  width: 160px;
  padding-left: 5px;
  gap: 3px;
}
.dash {
  width: 60px;
  height: 1px;
  background: #111;
}
.c-tail2 {
  width: 30px;
  padding-left: 5px;
  border-right: none;
  overflow: hidden;
}

/* main area */
.workspace {
  display: flex;
  height: 711px;
}
.side-left {
  width: 34px;
  flex: none;
  padding: 2px 0 0 5px;
  box-sizing: border-box;
  background: #6f6f6f;
  border-right: 1px solid #ccc;
}
.vbar {
  width: 23px;
  background: #ececec;
  box-shadow: 0 0 0 1px #3c3c3c;
}
.vgrip {
  height: 6px;
  background: #555 repeating-linear-gradient(90deg, #c8c8c8 0 1px, #555 1px 2px) center / 15px 3px no-repeat;
}
.v-btn {
  height: 22.05px;
  display: flex;
  align-items: center;
  justify-content: center;
}
.center {
  width: 918px;
  flex: none;
}
.view-row {
  display: flex;
  height: 689px;
}
.canvas {
  position: relative;
  width: 900px;
  height: 689px;
  flex: none;
  overflow: hidden;
}
.drawing {
  display: block;
}
.ucs {
  fill: #e6e8ea;
  font: 200 19px Inter, "Liberation Sans", sans-serif;
}
.cube-top {
  fill: #70757a;
  font: 200 30px "Noto Sans CJK SC", sans-serif;
  text-anchor: middle;
}
.compass {
  fill: #c8c8c8;
  font: 18px "Noto Sans CJK SC", sans-serif;
  text-anchor: middle;
}
.vp-label {
  position: absolute;
  left: 4px;
  top: 8px;
  color: #dcdcdc;
  font: 12px/16px "Noto Sans CJK SC", sans-serif;
  letter-spacing: 0.2px;
}
.wcs {
  position: absolute;
  left: 795px;
  top: 167px;
  width: 48px;
  height: 17px;
  padding-left: 4px;
  box-sizing: border-box;
  border-radius: 4px;
  border: 1px solid #989baa;
  background: #7f8294;
  color: #50535f;
  font: 10px/15px "Liberation Sans", sans-serif;
  display: flex;
  align-items: center;
  gap: 5px;
}
.wcs i {
  width: 0;
  height: 0;
  border-left: 4px solid transparent;
  border-right: 4px solid transparent;
  border-top: 4px solid #a2a5b2;
}
.vscroll {
  position: relative;
  width: 18px;
  flex: none;
  background: #f0f0f0;
}
.sc-up,
.sc-down {
  position: absolute;
  left: 5px;
  width: 0;
  height: 0;
  border-left: 3px solid transparent;
  border-right: 3px solid transparent;
}
.sc-up {
  top: 9px;
  border-bottom: 4px solid #333;
}
.sc-down {
  bottom: 7px;
  border-top: 4px solid #333;
}
.sc-thumb {
  position: absolute;
  left: 2px;
  top: 20px;
  width: 14px;
  height: 15px;
  box-sizing: border-box;
  border: 1px solid #999;
  border-radius: 2px;
  background: linear-gradient(90deg, #fff, #c8c8c8);
}
.layout-row {
  position: relative;
  display: flex;
  align-items: center;
  height: 17px;
  background: linear-gradient(#f4f4f4, #e6e6e6);
  border-bottom: 1px solid #fff;
  font: 12px/16px "Liberation Sans", "Noto Sans CJK SC", sans-serif;
}
.nav-btns {
  display: flex;
  gap: 1px;
  margin-left: 1px;
  width: 57px;
}
.nb {
  position: relative;
  width: 13px;
  height: 15px;
  background: #dcdcdc;
  border: 1px solid #bbb;
  box-sizing: border-box;
}
.nb::after {
  content: "";
  position: absolute;
  left: 3px;
  top: 2px;
  border-top: 4px solid transparent;
  border-bottom: 4px solid transparent;
}
.first::after,
.prev::after {
  border-right: 5px solid #333;
}
.next::after,
.last::after {
  border-left: 5px solid #333;
}
.lt {
  position: relative;
  width: 46px;
  text-align: center;
  color: #111;
}
.lt-model {
  width: 42px;
  color: #fff;
  background: #222;
  clip-path: polygon(0 0, 100% 0, 88% 100%, 12% 100%);
}
.slant::after {
  content: "";
  position: absolute;
  right: 1px;
  top: 0;
  width: 1px;
  height: 16px;
  background: #555;
  transform: rotate(16deg);
}
.split {
  position: absolute;
  left: 595px;
  top: 1px;
  width: 5px;
  height: 14px;
  border: 1px solid #aaa;
  border-radius: 2px;
  background: #fff;
}
.h-left,
.h-right {
  position: absolute;
  top: 5px;
  border-top: 4px solid transparent;
  border-bottom: 4px solid transparent;
}
.h-left {
  left: 606px;
  border-right: 4px solid #333;
}
.h-right {
  left: 890px;
  border-left: 4px solid #333;
}
.h-thumb {
  position: absolute;
  left: 769px;
  top: 1px;
  width: 15px;
  height: 13px;
  border: 1px solid #999;
  border-radius: 2px;
  background: linear-gradient(#e8e8e8, #b8b8b8);
}
.side-right {
  flex: none;
  width: 37px;
  padding: 2px 0 0 6px;
  box-sizing: border-box;
  background: linear-gradient(90deg, #666, #6f6f6f);
}
.side-right .vbar {
  width: 24px;
}
.r1 .v-btn {
  height: 21.9px;
}
.r1 .vgrip {
  height: 7px;
}
.r2 {
  margin-top: 3px;
}
.r2 .vgrip {
  height: 9px;
}
.hsep {
  height: 1px;
  margin: 1px 2px;
  background: #aaa;
}
.r2 .v-btn:last-child {
  height: 20px;
}

/* command line */
.command {
  display: flex;
  height: 57px;
  padding-left: 5px;
  padding-right: 5px;
  box-sizing: border-box;
}
.cmd-handle {
  width: 21px;
  flex: none;
  display: flex;
  flex-direction: column;
  align-items: center;
  background: linear-gradient(#6a6a6a, #505050 70%, #3c3c3c);
  color: #eee;
  padding-top: 5px;
  box-sizing: border-box;
}
.cmd-grip {
  width: 15px;
  height: 3px;
  background: repeating-linear-gradient(90deg, #bbb 0 1px, #666 1px 2px);
}
.cmd-x {
  font: 700 19px/20px "Liberation Sans", sans-serif;
  margin: 2px 0 3px;
}
.cmd-body {
  flex: 1;
  display: flex;
  flex-direction: column;
  font-family: "Liberation Sans", "Noto Sans CJK SC", sans-serif;
}
.cmd-log {
  height: 34px;
  padding: 2px 0 0 3px;
  box-sizing: border-box;
  background: #c4c4c4;
  line-height: 14px;
  color: #111;
}
.cmd-log > div {
  height: 14px;
}
.colon {
  margin-left: 4px;
}
.cancel {
  margin-left: 11px;
  letter-spacing: 0.6px;
}
.cmd-input {
  height: 23px;
  border-top: 1px solid #888;
  box-sizing: border-box;
  display: flex;
  align-items: center;
  padding-left: 5px;
  background: #fff;
  color: #999;
  gap: 3px;
}
.cmd-input span {
  margin-left: 8px;
}

/* status bar */
.status {
  display: flex;
  align-items: stretch;
  height: 26px;
  box-sizing: border-box;
  padding-bottom: 3px;
  background: linear-gradient(#909090, #626262);
  border-top: 1px solid #3f3f3f;
}
.coords {
  width: 222px;
  flex: none;
  padding-left: 16px;
  box-sizing: border-box;
  font: 10px/22px "Liberation Mono", monospace;
  color: #1c1c1c;
}
.st-btn {
  width: 22px;
  flex: none;
  display: flex;
  align-items: center;
  justify-content: center;
  box-sizing: border-box;
  border-right: 1px solid #777;
  background: linear-gradient(#c0c0c0, #a2a2a2);
}
.st-btn.on {
  background: linear-gradient(#e2eef3, #bcd8e4 45%, #6fa9c4 60%, #a8cfdf);
}
.st-btn.sel {
  box-shadow: inset 0 0 0 1px #fff;
}
.st-gap {
  width: 86px;
  flex: none;
  background: linear-gradient(#6c6c6c, #8c8c8c);
}
.st-model {
  width: 28px;
  margin-right: 1px;
  font: 13px "Noto Sans CJK SC", sans-serif;
  color: #111;
}
.g-s {
  width: 18px;
}
.st-scale {
  width: 53px;
  gap: 1px;
  font: 11px "DejaVu Sans", sans-serif;
}
.g-t {
  width: 6px;
}
.st-light {
  width: 25px;
  background: linear-gradient(#555, #999);
}
.st-tri {
  align-self: center;
  margin: 0 5px;
}
.st-win {
  width: 18px;
}
.st-grip {
  width: 10px;
  height: 12px;
  margin: 8px 0 0 8px;
  background: radial-gradient(circle, #ccc 1px, transparent 1.3px) 0 0 / 4px 4px;
}

/* baidu watermark */
.watermark {
  position: absolute;
  left: 755px;
  top: 825px;
  width: 234px;
  height: 90px;
  color: #fff;
  opacity: 0.6;
  pointer-events: none;
}
.paw {
  position: absolute;
  left: 62px;
  top: 0;
  fill: #fff;
}
.wm-bai {
  position: absolute;
  left: 4px;
  top: 14px;
  font: 700 40px/46px "Liberation Sans", sans-serif;
}
.wm-du {
  position: absolute;
  left: 75px;
  top: 28px;
  color: #8c8c8c;
  font: 700 24px/28px "Liberation Sans", sans-serif;
}
.wm-cn {
  position: absolute;
  left: 120px;
  top: 18px;
  font: 700 29px/38px "Noto Sans CJK SC", sans-serif;
}
.wm-url {
  position: absolute;
  left: 5px;
  top: 58px;
  color: #c4c4c4;
  font: 22.5px/26px "Liberation Sans", sans-serif;
}
</style>

<style>
html,
body {
  margin: 0;
  background: #6c6c6c;
}
</style>
